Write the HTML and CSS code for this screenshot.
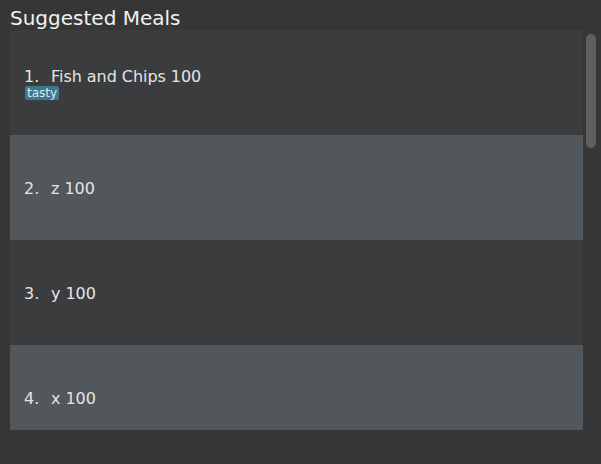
FILE: index.html
```html
<!DOCTYPE html>
<html>
<head>
<meta charset="utf-8">
<link rel="stylesheet" href="styles.css">
</head>
<body>
<div class="title">Suggested Meals</div>
<div class="list">
  <div class="items">
    <div class="row odd">
      <div class="line"><span class="num">1.</span><span class="name">Fish and Chips 100</span></div>
      <div class="tags"><span class="tag">tasty</span></div>
    </div>
    <div class="row even">
      <div class="line"><span class="num">2.</span><span class="name">z 100</span></div>
    </div>
    <div class="row odd">
      <div class="line"><span class="num">3.</span><span class="name">y 100</span></div>
    </div>
    <div class="row even">
      <div class="line"><span class="num">4.</span><span class="name">x 100</span></div>
    </div>
  </div>
  <div class="track"><div class="thumb"></div></div>
</div>
</body>
</html>
```
FILE: styles.css
```css
html, body {
  margin: 0;
  padding: 0;
  background: #363636;
  font-family: "DejaVu Sans", sans-serif;
}
.title {
  height: 30px;
  box-sizing: border-box;
  padding: 7px 0 0 10px;
  font-size: 20px;
  line-height: 23px;
  color: #f2f2f2;
}
.list {
  display: flex;
  margin-left: 10px;
  height: 400px;
}
.items {
  width: 573px;
  height: 400px;
  overflow: hidden;
}
.row {
  height: 105px;
  box-sizing: border-box;
  padding: 2px 0 0 14px;
  display: flex;
  flex-direction: column;
  justify-content: center;
  align-items: flex-start;
}
.odd { background: #3b3c3e; }
.even { background: #51575a; }
.line {
  white-space: pre;
  font-size: 16px;
  color: #e4e4e4;
}
.num {
  display: inline-block;
  width: 27px;
}
.name {
  letter-spacing: -0.05px;
}
.tags {
  display: flex;
  height: 14px;
}
.tag {
  display: block;
  height: 14px;
  margin-left: 1px;
  padding: 0 2px;
  border-radius: 2px;
  background: #3b798d;
  color: #dfe9ec;
  font-size: 12px;
  line-height: 14px;
}
.track {
  width: 18px;
  padding: 4px 5px 0 3px;
  box-sizing: border-box;
}
.thumb {
  width: 10px;
  height: 114px;
  border-radius: 5px;
  background: #5f5f5f;
}
```
